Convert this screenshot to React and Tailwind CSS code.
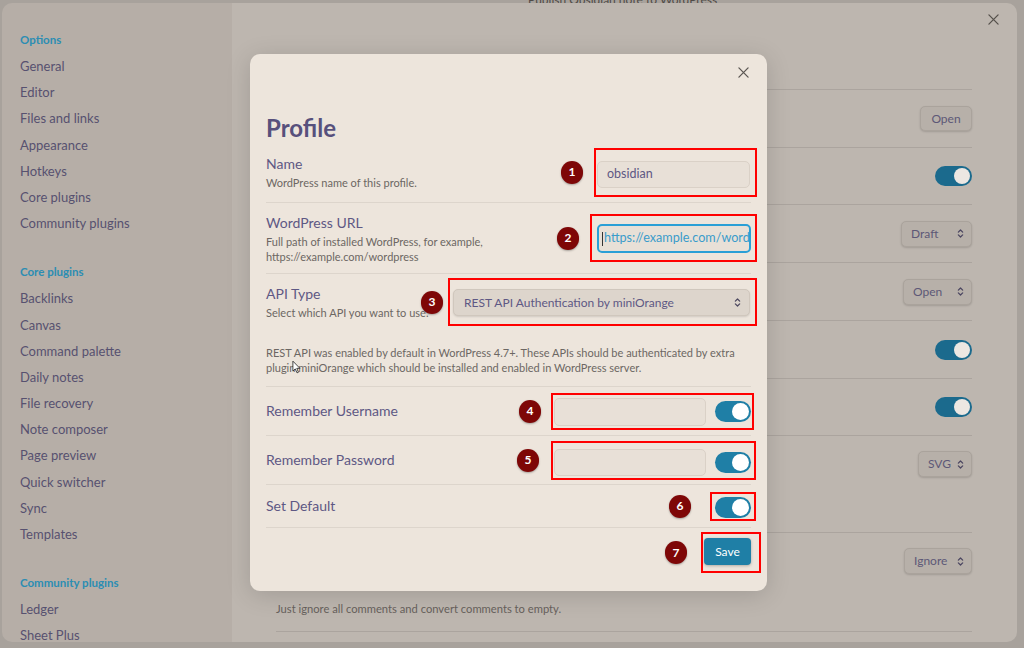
import React from "react";

const coreItems = [
  "Backlinks",
  "Canvas",
  "Command palette",
  "Daily notes",
  "File recovery",
  "Note composer",
  "Page preview",
  "Quick switcher",
  "Sync",
  "Templates",
];

const optionItems = [
  "General",
  "Editor",
  "Files and links",
  "Appearance",
  "Hotkeys",
  "Core plugins",
  "Community plugins",
];

const CloseIcon = ({ className }) => (
  <svg viewBox="0 0 12 12" className={className} fill="none" stroke="currentColor" strokeWidth="1.4" strokeLinecap="round">
    <path d="M1 1 L11 11 M11 1 L1 11" />
  </svg>
);

const UpDown = ({ className }) => (
  <svg viewBox="0 0 8 12" className={className} fill="none" stroke="currentColor" strokeWidth="1.4" strokeLinecap="round" strokeLinejoin="round">
    <path d="M1.5 4.5 L4 2 L6.5 4.5 M1.5 7.5 L4 10 L6.5 7.5" />
  </svg>
);

const SideHeader = ({ children, className = "" }) => (
  <div className={`h-[26px] leading-[26px] text-[11.5px] font-bold text-[#2b8db3] ${className}`}>{children}</div>
);

const SideItem = ({ children }) => (
  <div className="h-[26.2px] leading-[26px] text-[13px] text-[#575170]">{children}</div>
);

const Sidebar = () => (
  <div className="w-[230px] shrink-0 bg-[#b6aea7] pl-[18px] pt-[24px]">
    <SideHeader>Options</SideHeader>
    {optionItems.map((t) => (
      <SideItem key={t}>{t}</SideItem>
    ))}
    <SideHeader className="mt-[23px]">Core plugins</SideHeader>
    {coreItems.map((t) => (
      <SideItem key={t}>{t}</SideItem>
    ))}
    <SideHeader className="mt-[23px]">Community plugins</SideHeader>
    <SideItem>Ledger</SideItem>
    <SideItem>Sheet Plus</SideItem>
  </div>
);

// dimmed controls behind the dialog
const BgSelect = ({ label, w }) => (
  <div
    style={{ width: w }}
    className="h-[26px] rounded-[5px] bg-[#b7b0a9] border border-[#aaa39c] shadow-[0_1px_2px_rgba(0,0,0,0.15)] flex items-center justify-between pl-[9px] pr-[7px] text-[12px] text-[#5d5877]"
  >
    <span>{label}</span>
    <UpDown className="w-[7px] h-[11px] text-[#4a4560]" />
  </div>
);

const BgToggle = () => (
  <div className="w-[37px] h-[20px] rounded-full bg-[#1b6a8d] flex items-center justify-end pr-[2px]">
    <div className="w-[16px] h-[16px] rounded-full bg-[#ece7e2]" />
  </div>
);

const BgRow = ({ h, children, top }) => (
  <div
    style={{ height: h }}
    className={`border-t border-[#aba49e] flex justify-end ${top ? "items-start" : "items-center"}`}
  >
    {children}
  </div>
);

const Content = () => (
  <div className="relative flex-1 bg-[#bdb6af] pl-[44px] pr-[45px] pt-[44px]">
    <div className="absolute right-[18px] top-[11px] text-[#57524d]">
      <CloseIcon className="w-[11px] h-[11px]" />
    </div>
    <div className="h-[42px] pt-[2px] text-[16px] font-bold text-[#5f5a78] leading-[20px] pl-[12px]">Profile list</div>
    <BgRow h="58px">
      <div className="h-[25px] w-[52px] rounded-[5px] bg-[#b7b0a9] border border-[#aaa39c] shadow-[0_1px_2px_rgba(0,0,0,0.15)] flex items-center justify-center text-[12px] text-[#5d5877]">
        Open
      </div>
    </BgRow>
    <BgRow h="57px">
      <BgToggle />
    </BgRow>
    <BgRow h="58px">
      <BgSelect label="Draft" w="71px" />
    </BgRow>
    <BgRow h="58px">
      <BgSelect label="Open" w="69px" />
    </BgRow>
    <BgRow h="58px">
      <BgToggle />
    </BgRow>
    <BgRow h="57px">
      <BgToggle />
    </BgRow>
    <BgRow h="97px" top>
      <div className="pt-[15px]">
        <BgSelect label="SVG" w="54px" />
      </div>
    </BgRow>
    <div className="h-[99px] border-t border-[#aba49e] flex flex-col">
      <div className="flex justify-end pt-[15px]">
        <BgSelect label="Ignore" w="68px" />
      </div>
      <div className="mt-[27px] text-[11.2px] text-[#67615c] leading-[15px]">
        Just ignore all comments and convert comments to empty.
      </div>
    </div>
    <div className="border-t border-[#aba49e]" />
  </div>
);

// dialog parts
const Badge = ({ n, gap }) => (
  <div
    style={{ marginRight: gap }}
    className="w-[22px] h-[23px] shrink-0 rounded-full bg-[#7e0707] text-white text-[12px] font-bold flex items-center justify-center shadow-[0_1px_2px_rgba(0,0,0,0.3)]"
  >
    {n}
  </div>
);

const Toggle = () => (
  <div className="w-[36px] h-[21px] shrink-0 rounded-full bg-[#1f7fa6] flex items-center justify-end pr-[2px]">
    <div className="w-[17px] h-[17px] rounded-full bg-white" />
  </div>
);

const Field = ({ className = "", children }) => (
  <div className={`rounded-[5px] bg-[#e8e0d7] border border-[#dad1c7] ${className}`}>{children}</div>
);

const Label = ({ name, desc }) => (
  <div className="min-w-0 whitespace-nowrap">
    <div className="text-[14px] leading-[20px] text-[#5e5884]">{name}</div>
    {desc && (
      <div className="mt-[1px] text-[11px] leading-[15px] text-[#6c6763]">
        {desc.map((d) => (
          <div key={d}>{d}</div>
        ))}
      </div>
    )}
  </div>
);

const Row = ({ h, border = true, children }) => (
  <div
    style={{ height: h }}
    className={`flex items-center justify-between ${border ? "border-t border-[#ddd5cc]" : ""}`}
  >
    {children}
  </div>
);

const Dialog = () => (
  <div className="absolute left-[250px] top-[54px] w-[517px] h-[537px] rounded-[10px] bg-[#ede5dc] shadow-[0_4px_24px_rgba(0,0,0,0.15)] px-[16px] pt-[60px]">
    <div className="absolute left-[488px] top-[13px] text-[#5b5652]">
      <CloseIcon className="w-[11px] h-[11px]" />
    </div>
    <div className="h-[28px] text-[24px] leading-[28px] font-bold text-[#57507c]">Profile</div>

    <Row h="60px" border={false}>
      <Label name="Name" desc={["WordPress name of this profile."]} />
      <div className="flex items-center shrink-0">
        <Badge n="1" gap="11px" />
        <div className="border-2 border-[#ff0000] pl-[1px] pr-[5px] pt-[11px] pb-[7px] -mr-[6px]">
          <Field className="w-[153px] h-[27px] flex items-center pl-[9px] text-[12.5px] text-[#5e5884]">obsidian</Field>
        </div>
      </div>
    </Row>

    <Row h="71px">
      <Label
        name="WordPress URL"
        desc={["Full path of installed WordPress, for example,", "https://example.com/wordpress"]}
      />
      <div className="flex items-center shrink-0">
        <Badge n="2" gap="11px" />
        <div className="border-2 border-[#ff0000] pl-[5px] pr-[4px] pt-[8px] pb-[7px] -mr-[6px]">
          <div className="w-[154px] h-[29px] rounded-[5px] bg-[#e8e0d7] border-2 border-[#2a9fd6] flex items-center pl-[3px] overflow-hidden whitespace-nowrap">
            <div className="w-[1px] h-[14px] bg-[#333] mr-[1px] shrink-0" />
            <span className="text-[12.6px] text-[#3a9ccb]">https://example.com/wordpress</span>
          </div>
        </div>
      </div>
    </Row>

    <Row h="57px">
      <Label name="API Type" desc={["Select which API you want to use."]} />
      <div className="flex items-center shrink-0">
        <Badge n="3" gap="5px" />
        <div className="border-2 border-[#ff0000] pl-[3px] pr-[5px] pt-[9px] pb-[8px] -mr-[6px]">
          <div className="w-[297px] h-[27px] rounded-[5px] bg-[#ddd5cc] border border-[#d0c7bd] shadow-[0_1px_2px_rgba(0,0,0,0.12)] flex items-center justify-between pl-[10px] pr-[8px] text-[12px] text-[#5e5884]">
            <span>REST API Authentication by miniOrange</span>
            <UpDown className="w-[7px] h-[11px] text-[#4c475f]" />
          </div>
        </div>
      </div>
    </Row>

    <div className="h-[56px] flex items-center pt-[4px] text-[11px] leading-[15px] text-[#6c6763]">
      <div>
        REST API was enabled by default in WordPress 4.7+. These APIs should be authenticated by extra
        <br />
        plugin miniOrange which should be installed and enabled in WordPress server.
      </div>
    </div>

    <Row h="49px">
      <Label name="Remember Username" />
      <div className="flex items-center shrink-0">
        <Badge n="4" gap="10px" />
        <div className="border-2 border-[#ff0000] pl-[1px] pr-[1px] pt-[3px] pb-[2px] -mr-[3px] flex items-center gap-[9px]">
          <Field className="w-[152px] h-[28px]" />
          <Toggle />
        </div>
      </div>
    </Row>

    <Row h="49px">
      <Label name="Remember Password" />
      <div className="flex items-center shrink-0">
        <Badge n="5" gap="12px" />
        <div className="border-2 border-[#ff0000] pl-[1px] pr-[3px] pt-[6px] pb-[2px] -mr-[5px] flex items-center gap-[9px]">
          <Field className="w-[152px] h-[27px]" />
          <Toggle />
        </div>
      </div>
    </Row>

    <Row h="43px">
      <Label name="Set Default" />
      <div className="flex items-center shrink-0">
        <Badge n="6" gap="19px" />
        <div className="border-2 border-[#ff0000] pl-[3px] pr-[3px] pt-[3px] pb-[1px] -mr-[5px]">
          <Toggle />
        </div>
      </div>
    </Row>

    <div className="border-t border-[#ddd5cc] pt-[4px] flex justify-end items-center">
      <Badge n="7" gap="14px" />
      <div className="border-2 border-[#ff0000] pl-[1px] pr-[8px] pt-[4px] pb-[6px] -mr-[10px]">
        <div className="w-[47px] h-[27px] rounded-[4px] bg-[#1f7fa6] shadow-[0_1px_3px_rgba(0,0,0,0.25)] flex items-center justify-center text-[12px] text-white">
          Save
        </div>
      </div>
    </div>

    {/* mouse pointer */}
    <svg viewBox="0 0 10 15" className="absolute left-[42px] top-[306px] w-[9px] h-[14px]">
      <path d="M1 1 L1 12 L3.6 9.6 L5.6 14 L7.2 13.3 L5.3 9 L8.8 9 Z" fill="#ffffff" stroke="#222" strokeWidth="0.9" strokeLinejoin="round" />
    </svg>
  </div>
);

export default function App() {
  return (
    <div className="relative w-[1024px] h-[648px] overflow-hidden bg-[#a8a29c] font-[Lato,'Noto_Sans',sans-serif] pt-[3px] pl-[2px]">
      <div className="absolute left-[528px] top-[-9px] text-[12px] text-[#4f4a46]">Publish Obsidian note to WordPress</div>
      <div className="w-[1015px] h-[639px] rounded-[10px] overflow-hidden flex">
        <Sidebar />
        <Content />
      </div>
      <Dialog />
    </div>
  );
}
